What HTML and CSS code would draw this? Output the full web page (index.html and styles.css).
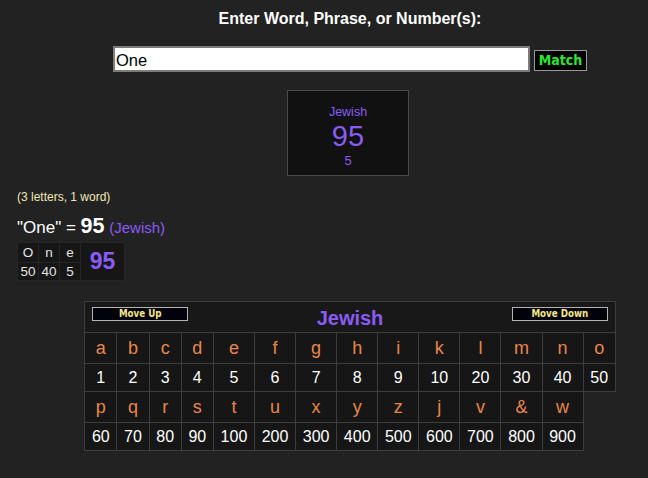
FILE: index.html
```html
<!DOCTYPE html>
<html lang="en">
<head>
<meta charset="utf-8">
<title>Gematria</title>
<link rel="stylesheet" href="styles.css">
</head>
<body>
<header class="top">
  <h1 class="title">Enter Word, Phrase, or Number(s):</h1>
  <form class="search">
    <input class="search-input" type="text" value="One">
    <button class="match-btn" type="button">Match</button>
  </form>
  <div class="result-wrap">
    <div class="result-box">
      <div class="rb-name">Jewish</div>
      <div class="rb-value">95</div>
      <div class="rb-sub">5</div>
    </div>
  </div>
</header>

<section class="summary">
  <p class="count">(3 letters, 1 word)</p>
  <p class="phrase">"One" = <span class="phrase-num">95</span> <span class="phrase-cipher">(Jewish)</span></p>
  <table class="breakdown">
    <tr class="bd-letters"><td>O</td><td>n</td><td>e</td><td class="bd-total" rowspan="2">95</td></tr>
    <tr class="bd-values"><td>50</td><td>40</td><td>5</td></tr>
  </table>
</section>

<section class="cipher-wrap">
  <table class="cipher">
    <tr>
      <td class="cipher-head" colspan="14">
        <div class="head-bar">
          <button class="move-btn" type="button">Move Up</button>
          <span class="cipher-name">Jewish</span>
          <button class="move-btn" type="button">Move Down</button>
        </div>
      </td>
    </tr>
    <tr class="letters"><td>a</td><td>b</td><td>c</td><td>d</td><td>e</td><td>f</td><td>g</td><td>h</td><td>i</td><td>k</td><td>l</td><td>m</td><td>n</td><td>o</td></tr>
    <tr class="values"><td>1</td><td>2</td><td>3</td><td>4</td><td>5</td><td>6</td><td>7</td><td>8</td><td>9</td><td>10</td><td>20</td><td>30</td><td>40</td><td>50</td></tr>
    <tr class="letters"><td>p</td><td>q</td><td>r</td><td>s</td><td>t</td><td>u</td><td>x</td><td>y</td><td>z</td><td>j</td><td>v</td><td>&amp;</td><td>w</td></tr>
    <tr class="values"><td>60</td><td>70</td><td>80</td><td>90</td><td>100</td><td>200</td><td>300</td><td>400</td><td>500</td><td>600</td><td>700</td><td>800</td><td>900</td></tr>
  </table>
</section>
</body>
</html>
```

FILE: styles.css
```css
body {
  margin: 0;
  background: #222222;
  font-family: "Liberation Sans", Arial, sans-serif;
  color: #ffffff;
}

.top {
  padding-left: 52px;
  text-align: center;
}

.title {
  margin: 0;
  padding-top: 9px;
  font-size: 16px;
  line-height: 19px;
  font-weight: bold;
  color: #ffffff;
}

.search {
  display: flex;
  justify-content: center;
  align-items: flex-start;
  gap: 4px;
  margin: 18px 0 0;
}

.search-input {
  width: 417px;
  height: 26px;
  box-sizing: border-box;
  border: 2px solid #7c7c7c;
  background: #ffffff;
  color: #000000;
  font-family: "Liberation Sans", Arial, sans-serif;
  font-size: 16.5px;
  padding: 2px 1px 0;
  outline: none;
}

.match-btn {
  margin-top: 4px;
  width: 53px;
  height: 21px;
  box-sizing: border-box;
  background: #000000;
  border: 1px solid #9a9a9a;
  color: #2fe62f;
  font-family: "DejaVu Sans Condensed", "DejaVu Sans", sans-serif;
  font-weight: bold;
  font-size: 14px;
  line-height: 17px;
  padding: 0;
}

.result-wrap {
  display: flex;
  justify-content: center;
  padding-right: 4px;
  margin-top: 18px;
}

.result-box {
  width: 122px;
  height: 86px;
  box-sizing: border-box;
  border: 1px solid #4a4a4a;
  background: #111111;
  padding-top: 13px;
  color: #8a5cf6;
  text-align: center;
}

.rb-name {
  font-size: 12.5px;
  line-height: 16px;
}

.rb-value {
  font-size: 29px;
  line-height: 33px;
}

.rb-sub {
  font-size: 13px;
  line-height: 16px;
}

.summary {
  padding-left: 17px;
  margin-top: 14px;
}

.count {
  margin: 0;
  font-size: 12px;
  line-height: 14px;
  color: #eee8b4;
}

.phrase {
  margin: 10px 0 0;
  font-size: 17px;
  line-height: 24px;
  color: #ffffff;
}

.phrase-num {
  font-weight: bold;
  font-size: 21.5px;
}

.phrase-cipher {
  font-size: 15px;
  color: #8a5cf6;
}

.breakdown {
  margin-top: 2px;
  border-collapse: collapse;
}

.breakdown td {
  width: 20px;
  padding: 0;
  text-align: center;
  font-size: 13.5px;
  color: #e4e4e4;
  background: #161616;
  border: 1px solid #262626;
}

.bd-letters td {
  height: 19px;
  line-height: 19px;
}

.bd-values td {
  height: 17px;
  line-height: 17px;
}

.breakdown .bd-total {
  width: 43px;
  font-size: 23px;
  font-weight: bold;
  color: #8a5cf6;
}

.cipher-wrap {
  padding-left: 52px;
  margin-top: 20px;
}

.cipher {
  margin: 0 auto;
  border-collapse: collapse;
}

.cipher td {
  border: 1px solid #3e3e3e;
  background: #161616;
  text-align: center;
  padding: 0 6.7px;
}

.cipher .cipher-head {
  padding: 5px 7px 3px;
  background: #181818;
}

.head-bar {
  display: flex;
  justify-content: space-between;
  align-items: flex-start;
}

.move-btn {
  width: 96px;
  height: 14px;
  box-sizing: border-box;
  padding: 0;
  background: #02020a;
  border: 1px solid #b4b4b4;
  color: #f6e78a;
  font-family: "DejaVu Sans Condensed", "DejaVu Sans", sans-serif;
  font-weight: bold;
  font-size: 9.7px;
  line-height: 12px;
}

.cipher-name {
  font-size: 20px;
  font-weight: bold;
  color: #8a5cf6;
  line-height: 22px;
}

.letters td {
  height: 30px;
  line-height: 30px;
  font-size: 18px;
  color: #e8874a;
}

.values td {
  height: 27px;
  line-height: 27px;
  font-size: 16px;
  color: #ffffff;
}
```
